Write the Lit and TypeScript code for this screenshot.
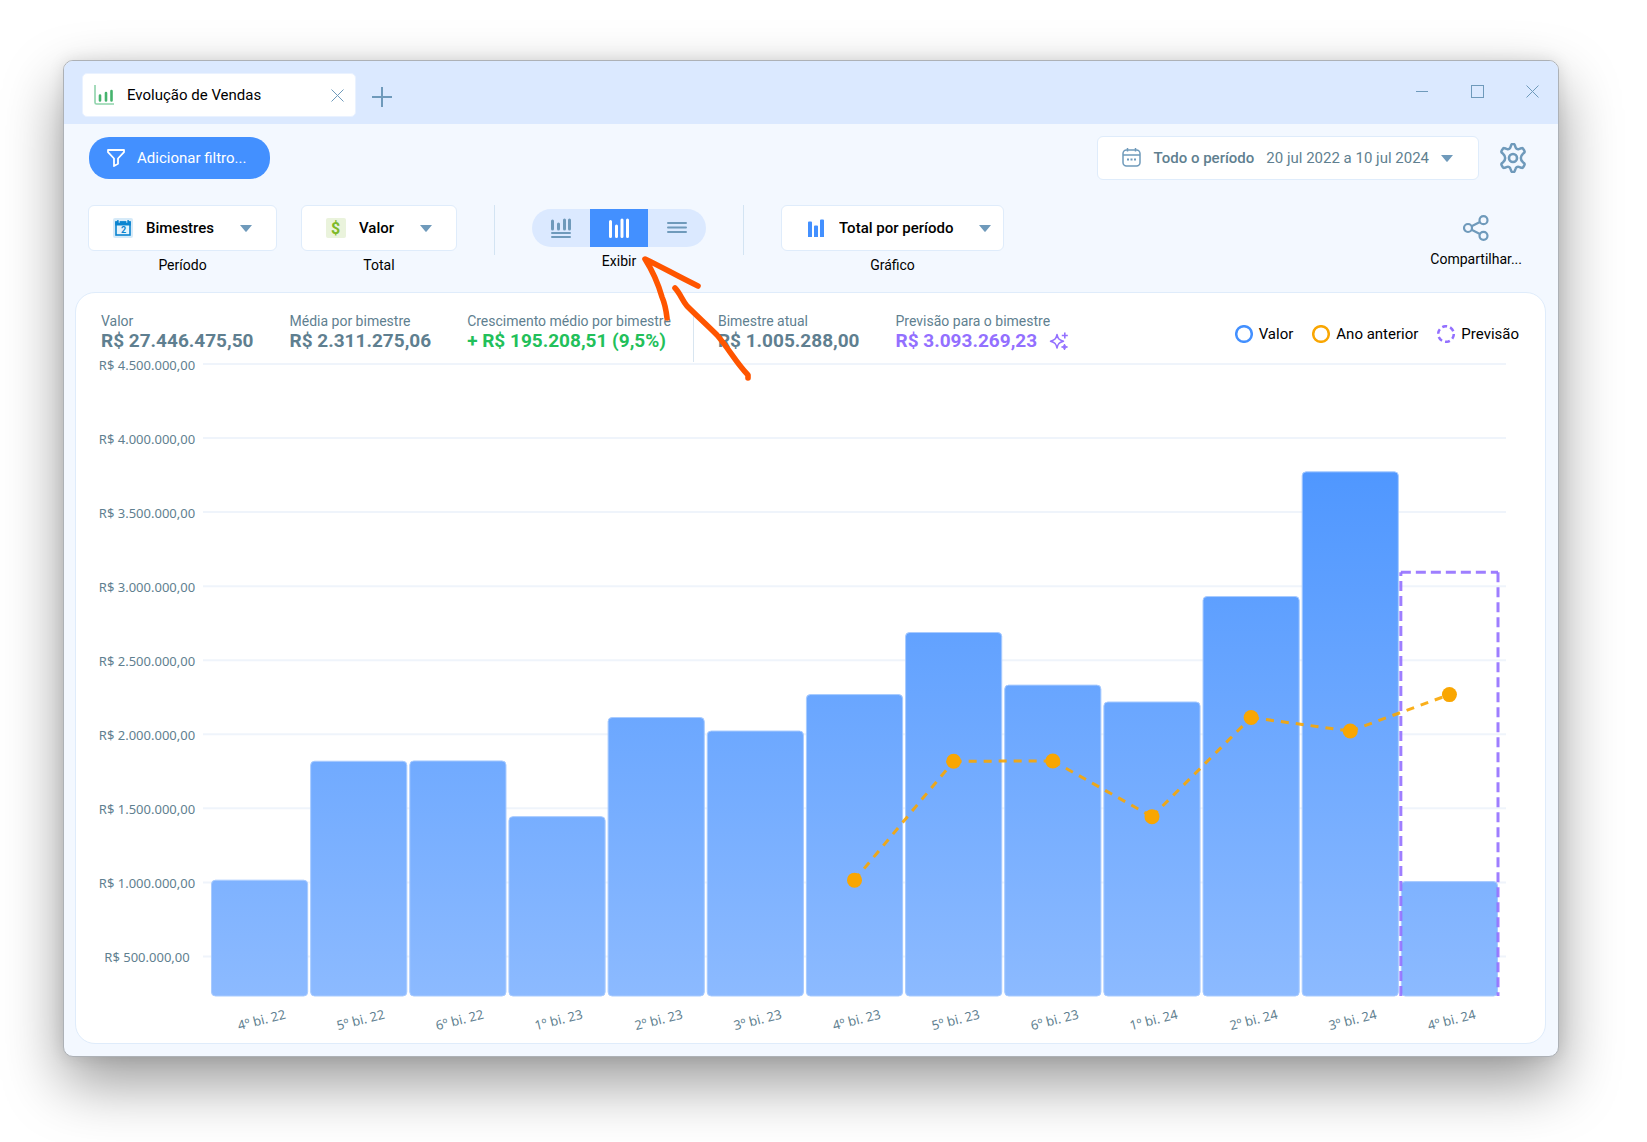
import { LitElement, html, svg, css, nothing } from "lit";
import { customElement, property, state } from "lit/decorators.js";
import { classMap } from "lit/directives/class-map.js";

const SCALE_MAX = 4_500_000;
const SCALE_MIN = 233_000;
const TICK_STEP = 500_000;

interface Period {
  label: string;
  value: number;
  previous?: number;
  forecast?: number;
}

const PERIODS: Period[] = [
  { label: "4º bi. 22", value: 1_015_000 },
  { label: "5º bi. 22", value: 1_818_000 },
  { label: "6º bi. 22", value: 1_820_000 },
  { label: "1º bi. 23", value: 1_444_000 },
  { label: "2º bi. 23", value: 2_113_000 },
  { label: "3º bi. 23", value: 2_022_000 },
  { label: "4º bi. 23", value: 2_268_000, previous: 1_015_000 },
  { label: "5º bi. 23", value: 2_687_000, previous: 1_818_000 },
  { label: "6º bi. 23", value: 2_332_000, previous: 1_820_000 },
  { label: "1º bi. 24", value: 2_218_000, previous: 1_444_000 },
  { label: "2º bi. 24", value: 2_930_000, previous: 2_113_000 },
  { label: "3º bi. 24", value: 3_772_000, previous: 2_022_000 },
  { label: "4º bi. 24", value: 1_005_288, previous: 2_268_000, forecast: 3_093_269 },
];

const TICKS = Array.from({ length: 9 }, (_, i) => SCALE_MAX - i * TICK_STEP);

const toTop = (value: number) => ((SCALE_MAX - value) / (SCALE_MAX - SCALE_MIN)) * 100;
const money = (value: number) =>
  "R$ " + String(value).replace(/\B(?=(\d{3})+$)/g, ".") + ",00";

const icons = {
  report: html`<svg width="20" height="20" viewBox="0 0 20 20" aria-hidden="true">
    <path d="M1 0v17.500a1.500 1.500 0 0 0 1.500 1.500H20" fill="none" stroke="#8fd3ab" stroke-width="1.600" />
    <path d="M6 10.500v5M12 8v7.500M17.500 6v9.500" stroke="#45b36d" stroke-width="2.600" stroke-linecap="round" />
  </svg>`,
  close: html`<svg width="13" height="13" viewBox="0 0 13 13" aria-hidden="true">
    <path d="M.5 .5l12 12M12.500 .5l-12 12" stroke="#6f9abb" stroke-width="1" />
  </svg>`,
  plus: html`<svg width="20" height="20" viewBox="0 0 20 20" aria-hidden="true">
    <path d="M10 0v20M0 10h20" stroke="#6f9abb" stroke-width="2" />
  </svg>`,
  minimize: html`<svg width="13" height="13" viewBox="0 0 13 13" aria-hidden="true">
    <path d="M0 6.500h12" stroke="#6f9abb" />
  </svg>`,
  maximize: html`<svg width="13" height="13" viewBox="0 0 13 13" aria-hidden="true">
    <rect x=".5" y=".5" width="12" height="12" fill="none" stroke="#6f9abb" />
  </svg>`,
  funnel: html`<svg width="18" height="18" viewBox="0 0 18 18" aria-hidden="true">
    <path d="M1 1h16v2.200L11 9.500v5.300L7 17V9.500L1 3.200z" fill="none" stroke="#fff" stroke-width="1.800" stroke-linejoin="round" />
  </svg>`,
  calendarLine: html`<svg width="20" height="20" viewBox="0 0 20 20" aria-hidden="true">
    <rect x="1" y="2" width="17" height="16" rx="3.500" fill="none" stroke="#6f9abb" stroke-width="1.500" />
    <path d="M1 7h17M5.500 0v3.500M13.500 0v3.500" stroke="#6f9abb" stroke-width="1.500" />
    <path d="M5 11.500h2M8.500 11.500h2M12 11.500h2" stroke="#6f9abb" stroke-width="1.800" />
  </svg>`,
  gear: html`<svg width="30" height="30" viewBox="0 0 30 30" aria-hidden="true">
    <path
      d="M13.200 2.100a1.900 1.900 0 0 1 3.600 0l.8 2.300a2.500 2.500 0 0 0 3.200 1.700l2.400-.8a1.700 1.700 0 0 1 2.200.8l.9 1.600a1.700 1.700 0 0 1-.4 2.200l-1.300 1.300a5 5 0 0 0 0 7.600l1.300 1.300a1.700 1.700 0 0 1 .4 2.200l-.9 1.600a1.700 1.700 0 0 1-2.200.8l-2.400-.8a2.500 2.500 0 0 0-3.200 1.700l-.8 2.300a1.900 1.900 0 0 1-3.600 0l-.8-2.300a2.500 2.500 0 0 0-3.200-1.700l-2.400.8a1.700 1.700 0 0 1-2.200-.8l-.9-1.600a1.700 1.700 0 0 1 .4-2.200l1.300-1.300a5 5 0 0 0 0-7.600L4.100 9.900a1.700 1.700 0 0 1-.4-2.200l.9-1.600a1.700 1.700 0 0 1 2.200-.8l2.400.8a2.500 2.500 0 0 0 3.200-1.700z"
      fill="none" stroke="#6f9abb" stroke-width="2.500" stroke-linejoin="round" />
    <circle cx="15" cy="15" r="4" fill="none" stroke="#6f9abb" stroke-width="2.600" />
  </svg>`,
  calendar: html`<svg width="20" height="20" viewBox="0 0 20 20" aria-hidden="true">
    <rect width="20" height="20" rx="2" fill="#d6eaf8" />
    <rect x="3" y="4" width="14" height="13" fill="#e6f3fb" stroke="#0a84d0" stroke-width="1.600" />
    <path d="M2.200 3.500h15.600v4H2.200z" fill="#0a84d0" />
    <path d="M5 2v3M15 2v3" stroke="#0a84d0" stroke-width="1.600" />
    <path d="M6.200 2v2.800M13.800 2v2.800" stroke="#fff" stroke-width=".8" />
    <text x="10.500" y="15.300" text-anchor="middle" font-family="Roboto, sans-serif" font-size="9" font-weight="700" fill="#0a84d0">2</text>
  </svg>`,
  money: html`<svg width="20" height="20" viewBox="0 0 20 20" aria-hidden="true">
    <rect width="20" height="20" rx="2" fill="#eaf3dc" />
    <text x="9.500" y="15.500" text-anchor="middle" font-family="Roboto, sans-serif" font-size="16" font-weight="700" fill="#7db928">$</text>
  </svg>`,
  bars: html`<svg width="20" height="20" viewBox="0 0 20 20" aria-hidden="true">
    <path d="M2 4.500a1 1 0 0 1 1-1h2a1 1 0 0 1 1 1V19H2zM8 8.500a1 1 0 0 1 1-1h2a1 1 0 0 1 1 1V19H8zM14 2.500a1 1 0 0 1 1-1h2a1 1 0 0 1 1 1V19h-4z" fill="#4390ff" />
  </svg>`,
  both: html`<svg width="20" height="20" viewBox="0 0 20 20" aria-hidden="true">
    <path d="M1.500 3v8M7.500 6v5M13.500 2v9M18.500 2v9" stroke="#6f9abb" stroke-width="3" stroke-linecap="round" />
    <path d="M1 15h18M1 19h18" stroke="#6f9abb" stroke-width="2" stroke-linecap="round" />
  </svg>`,
  chart: html`<svg width="20" height="20" viewBox="0 0 20 20" aria-hidden="true">
    <path d="M1.500 3.500v15M7.500 8v10.500M13 2v16.500M18.500 2v16.500" stroke="#fff" stroke-width="3" stroke-linecap="round" />
  </svg>`,
  list: html`<svg width="20" height="20" viewBox="0 0 20 20" aria-hidden="true">
    <path d="M1 5h18M1 9.500h18M1 14h18" stroke="#6f9abb" stroke-width="2" stroke-linecap="round" />
  </svg>`,
  share: html`<svg width="26" height="26" viewBox="0 0 26 26" aria-hidden="true">
    <g fill="none" stroke="#6f9abb" stroke-width="2.200">
      <circle cx="5" cy="13" r="4" />
      <circle cx="20.500" cy="5.200" r="4" />
      <circle cx="20.500" cy="20.800" r="4" />
      <path d="M8.600 11.300l8.300-4.200M8.600 14.700l8.300 4.200" />
    </g>
  </svg>`,
  caret: html`<svg class="caret" width="12" height="7" viewBox="0 0 12 7" aria-hidden="true">
    <path d="M0 0h12L6.800 6.200a1 1 0 0 1-1.600 0z" fill="#6f9abb" />
  </svg>`,
  sparkle: html`<svg width="20" height="20" viewBox="0 0 20 20" aria-hidden="true">
    <path d="M8 3.500C9 7.800 10 9 14.500 10.200 10 11.400 9 12.600 8 17 7 12.600 6 11.400 1.500 10.200 6 9 7 7.800 8 3.500z" fill="none" stroke="#9370ff" stroke-width="1.500" stroke-linejoin="round" />
    <path d="M15.800 1.500v6M12.800 4.500h6" stroke="#9370ff" stroke-width="1.600" />
    <path d="M15.500 13c.5 1.900 1 2.400 3 3-2 .6-2.500 1.100-3 3-.5-1.900-1-2.400-3-3 2-.6 2.500-1.100 3-3z" fill="#9370ff" stroke="#9370ff" />
  </svg>`,
};

@customElement("sales-chart")
export class SalesChart extends LitElement {
  @property({ attribute: false }) periods: Period[] = [];

  static styles = css`
    :host {
      display: grid;
      grid-template-columns: 112px 1fr;
      grid-template-rows: 1fr 47px;
      flex: 1;
      min-height: 400px;
      padding: 0 39px 0 15px;
      color: #5f7f90;
      font: 13px/18px "Noto Sans", "Open Sans", sans-serif;
    }
    .ticks {
      display: grid;
      grid-template-rows: repeat(8, 500fr) 267fr;
      text-align: center;
    }
    .tick {
      height: 18px;
      margin-top: -8px;
    }
    .area {
      display: grid;
      min-height: 0;
    }
    .grid,
    .series {
      grid-area: 1 / 1;
      display: block;
      width: 100%;
      height: 100%;
      overflow: visible;
    }
    .inner {
      grid-area: 1 / 1;
      padding: 0 7px;
      min-height: 0;
    }
    .grid line {
      stroke: #eff4fb;
      stroke-width: 2;
    }
    .bar {
      fill: url(#bar-fill);
      stroke: #a8cbff;
      stroke-width: 1;
    }
    .forecast {
      stroke: #9370ff;
      stroke-width: 3;
      stroke-opacity: 0.9;
      stroke-dasharray: 10 5;
    }
    .trend {
      stroke: #f9a602;
      stroke-width: 3;
      stroke-opacity: 0.9;
      stroke-dasharray: 8 7;
    }
    .dot {
      fill: #f9a602;
    }
    .names {
      grid-column: 2;
      display: grid;
      grid-auto-flow: column;
      grid-auto-columns: 1fr;
      padding: 15px 7px 0;
      text-align: center;
    }
    .name {
      height: 18px;
      padding-left: 4px;
      transform: rotate(-14deg);
    }
  `;

  render() {
    const slot = 100 / this.periods.length;
    const middle = (i: number) => (i + 0.5) * slot;
    const pct = (n: number) => `${n}%`;

    return html`
      <div class="ticks">
        ${TICKS.map((t) => html`<div class="tick">${money(t)}</div>`)}
      </div>
      <div class="area">
        <svg class="grid" aria-hidden="true">
          ${TICKS.map((t) => svg`<line x1="0" x2="100%" y1=${pct(toTop(t))} y2=${pct(toTop(t))} />`)}
        </svg>
        <div class="inner">
          <svg class="series" role="img" aria-label="Total por período">
            <defs>
              <linearGradient id="bar-fill" gradientUnits="userSpaceOnUse" x1="0" y1="0" x2="0" y2="100%">
                <stop offset="0" stop-color="#4390ff" />
                <stop offset="1" stop-color="#8cbaff" />
              </linearGradient>
            </defs>
            ${this.periods.map(
              (p, i) => svg`<rect class="bar" rx="4" x=${pct(i * slot + slot * 0.015)} y=${pct(toTop(p.value))}
                width=${pct(slot * 0.97)} height=${pct(100 - toTop(p.value))} />`,
            )}
            ${this.periods.map((p, i) => {
              if (p.forecast === undefined) return nothing;
              const left = pct(i * slot + slot * 0.01);
              const right = pct((i + 1) * slot - slot * 0.01);
              const top = pct(toTop(p.forecast));
              return svg`
                <line class="forecast" x1=${left} x2=${right} y1=${top} y2=${top} />
                <line class="forecast" x1=${left} x2=${left} y1="100%" y2=${top} />
                <line class="forecast" x1=${right} x2=${right} y1=${top} y2="100%" />`;
            })}
            ${this.periods.map((p, i) => {
              const next = this.periods[i + 1];
              if (p.previous === undefined || next?.previous === undefined) return nothing;
              return svg`<line class="trend" x1=${pct(middle(i))} y1=${pct(toTop(p.previous))}
                x2=${pct(middle(i + 1))} y2=${pct(toTop(next.previous))} />`;
            })}
            ${this.periods.map((p, i) =>
              p.previous === undefined
                ? nothing
                : svg`<circle class="dot" r="7.500" cx=${pct(middle(i))} cy=${pct(toTop(p.previous))} />`,
            )}
          </svg>
        </div>
      </div>
      <div class="names">
        ${this.periods.map((p) => html`<div class="name">${p.label}</div>`)}
      </div>
    `;
  }
}

@customElement("app-root")
export class AppRoot extends LitElement {
  @state() private view = "chart";

  static styles = css`
    :host {
      display: flex;
      box-sizing: border-box;
      min-height: 100vh;
      padding: 60px 88px 85px 63px;
      background: #fff;
      color: #000;
      font: 15px/20px Roboto, "Open Sans", sans-serif;
    }
    * {
      box-sizing: border-box;
    }
    svg {
      display: block;
      flex: none;
    }
    button,
    select {
      font: inherit;
      color: inherit;
      margin: 0;
      padding: 0;
      border: 0;
      background: none;
      cursor: pointer;
    }
    .window {
      position: relative;
      flex: 1;
      min-width: 0;
      display: flex;
      flex-direction: column;
      border: 1px solid #adb1b6;
      border-radius: 10px;
      background: #f3f8ff;
      box-shadow: 0 26px 60px rgba(0, 0, 0, 0.4), 0 0 16px rgba(0, 0, 0, 0.1);
    }
    .titlebar {
      display: flex;
      align-items: center;
      height: 63px;
      padding: 0 19px 1px 18px;
      background: #dbe9ff;
      border-radius: 9px 9px 0 0;
    }
    .tab {
      display: flex;
      align-items: center;
      gap: 13px;
      width: 274px;
      height: 44px;
      margin-top: 6px;
      padding: 0 11px;
      background: #fff;
      border: 1px solid #eaf2ff;
      border-radius: 5px;
    }
    .tab-name {
      flex: 1;
    }
    .add {
      margin: 9px 0 0 16px;
    }
    .controls {
      display: flex;
      gap: 42px;
      margin-left: auto;
      padding-bottom: 1px;
    }
    .topbar {
      display: flex;
      align-items: center;
      justify-content: space-between;
      height: 44px;
      margin: 12px 30px 0 25px;
    }
    .filter {
      display: flex;
      align-items: center;
      gap: 12px;
      height: 42px;
      padding: 0 24px 0 18px;
      border-radius: 20px;
      background: #4390ff;
      color: #fff;
    }
    .range-group {
      display: flex;
      align-items: center;
      gap: 19px;
    }
    .range {
      display: flex;
      align-items: center;
      gap: 12px;
      height: 44px;
      padding: 0 25px 0 24px;
      border: 1px solid #dfecfb;
      border-radius: 6px;
      background: #fff;
      color: #5f7f90;
    }
    .strong {
      font-weight: 500;
    }
    .toolbar {
      display: flex;
      align-items: flex-start;
      gap: 24px;
      padding: 25px 36px 17px 24px;
    }
    .group {
      display: flex;
      flex-direction: column;
      align-items: center;
      gap: 4px;
      font-size: 14px;
    }
    .field {
      display: flex;
      align-items: center;
      height: 46px;
      padding: 0 24px;
      border: 1px solid #dfecfb;
      border-radius: 6px;
      background: #fff;
      font-size: 15px;
      font-weight: 500;
    }
    .field select {
      appearance: none;
      margin: 0 -12px 0 13px;
      padding-right: 37px;
      line-height: 20px;
    }
    .caret {
      pointer-events: none;
    }
    .field.compact {
      padding-right: 12px;
    }
    .rule {
      width: 1px;
      height: 50px;
      margin: 0 13px;
      background: #d3e4f3;
    }
    .view {
      padding-top: 4px;
    }
    .segments {
      display: flex;
      height: 38px;
      border-radius: 19px;
      background: #dbe9ff;
      overflow: hidden;
    }
    .segment {
      display: grid;
      place-items: center;
      width: 58px;
    }
    .segment.active {
      background: #4390ff;
    }
    .share {
      display: flex;
      flex-direction: column;
      align-items: center;
      gap: 8px;
      margin-left: auto;
      padding-top: 10px;
      font-size: 14px;
      line-height: 20px;
    }
    .card {
      flex: 1;
      display: flex;
      flex-direction: column;
      margin: 0 12px 12px 11px;
      border: 1px solid #dfecfb;
      border-radius: 20px;
      background: #fff;
    }
    .summary {
      display: flex;
      align-items: flex-start;
      padding: 20px 26px 2px 25px;
      color: #5f7f90;
    }
    .kpis {
      display: flex;
      gap: 36px;
      height: 49px;
    }
    .kpis + .kpis {
      margin-left: 22px;
      padding-left: 24px;
      border-left: 1px solid #d8e5f0;
    }
    .kpi {
      font-size: 14px;
      line-height: 16px;
    }
    .amount {
      display: flex;
      align-items: center;
      gap: 12px;
      font-size: 19px;
      line-height: 24px;
      font-weight: 700;
    }
    .good {
      color: #22c05a;
    }
    .future {
      color: #9370ff;
    }
    .legend {
      display: flex;
      gap: 19px;
      margin: 11px 0 0 auto;
      padding: 0;
      list-style: none;
      color: #000;
    }
    .legend li {
      display: flex;
      align-items: center;
      gap: 6px;
    }
    .annotation {
      position: absolute;
      left: 576px;
      top: 191px;
      pointer-events: none;
    }
  `;

  private segment(id: string, label: string, icon: unknown) {
    return html`<button
      type="button"
      class=${classMap({ segment: true, active: this.view === id })}
      aria-label=${label}
      aria-pressed=${this.view === id}
      @click=${() => (this.view = id)}
    >
      ${icon}
    </button>`;
  }

  private field(id: string, label: string, icon: unknown, value: string, compact = false) {
    return html`<div class="group">
      <div class=${classMap({ field: true, compact })}>
        ${icon}
        <select id=${id}>
          <option>${value}</option>
        </select>
        ${icons.caret}
      </div>
      <label for=${id}>${label}</label>
    </div>`;
  }

  private kpi(label: string, amount: string, tone = "", extra: unknown = nothing) {
    return html`<div class="kpi">
      <div>${label}</div>
      <div class="amount ${tone}">${amount}${extra}</div>
    </div>`;
  }

  private legend(label: string, color: string, dash = "none") {
    return html`<li>
      <svg width="18" height="18" viewBox="0 0 18 18" aria-hidden="true">
        <circle cx="9" cy="9" r="7.800" fill="none" stroke=${color} stroke-width="2.500" stroke-dasharray=${dash} />
      </svg>
      ${label}
    </li>`;
  }

  render() {
    return html`
      <main class="window">
        <header class="titlebar">
          <div class="tab">
            ${icons.report}
            <span class="tab-name">Evolução de Vendas</span>
            <button type="button" aria-label="Fechar aba">${icons.close}</button>
          </div>
          <button type="button" class="add" aria-label="Nova aba">${icons.plus}</button>
          <div class="controls">
            <button type="button" aria-label="Minimizar">${icons.minimize}</button>
            <button type="button" aria-label="Maximizar">${icons.maximize}</button>
            <button type="button" aria-label="Fechar">${icons.close}</button>
          </div>
        </header>

        <div class="topbar">
          <button type="button" class="filter">${icons.funnel}Adicionar filtro...</button>
          <div class="range-group">
            <button type="button" class="range">
              ${icons.calendarLine}
              <span class="strong">Todo o período</span>
              <span>20 jul 2022 a 10 jul 2024</span>
              ${icons.caret}
            </button>
            <button type="button" aria-label="Configurações">${icons.gear}</button>
          </div>
        </div>

        <div class="toolbar">
          ${this.field("period", "Período", icons.calendar, "Bimestres")}
          ${this.field("total", "Total", icons.money, "Valor")}
          <div class="rule"></div>
          <div class="group view">
            <div class="segments" role="group" aria-label="Exibir">
              ${this.segment("both", "Gráfico e lista", icons.both)}
              ${this.segment("chart", "Gráfico", icons.chart)}
              ${this.segment("list", "Lista", icons.list)}
            </div>
            <span>Exibir</span>
          </div>
          <div class="rule"></div>
          ${this.field("graph", "Gráfico", icons.bars, "Total por período", true)}
          <button type="button" class="share">${icons.share}Compartilhar...</button>
        </div>

        <section class="card">
          <div class="summary">
            <div class="kpis">
              ${this.kpi("Valor", "R$ 27.446.475,50")}
              ${this.kpi("Média por bimestre", "R$ 2.311.275,06")}
              ${this.kpi("Crescimento médio por bimestre", "+ R$ 195.208,51 (9,5%)", "good")}
            </div>
            <div class="kpis">
              ${this.kpi("Bimestre atual", "R$ 1.005.288,00")}
              ${this.kpi("Previsão para o bimestre", "R$ 3.093.269,23", "future", icons.sparkle)}
            </div>
            <ul class="legend">
              ${this.legend("Valor", "#4390ff")}
              ${this.legend("Ano anterior", "#f9a602")}
              ${this.legend("Previsão", "#9370ff", "5 3.17")}
            </ul>
          </div>
          <sales-chart .periods=${PERIODS}></sales-chart>
        </section>

        <svg class="annotation" width="120" height="134" viewBox="0 0 120 134" aria-hidden="true">
          <g fill="none" stroke="#ff5500" stroke-width="5.600" stroke-linecap="round" stroke-linejoin="round">
            <path d="M27 66c-1-9-2-14-5-21C18 31 12 18 5 7c15 7 34 18 53 27" />
            <path d="M35 36c5 5 7 12 12 18 10 10 20 19 30 29 12 14 20 29 31 40v3" />
          </g>
        </svg>
      </main>
    `;
  }
}
